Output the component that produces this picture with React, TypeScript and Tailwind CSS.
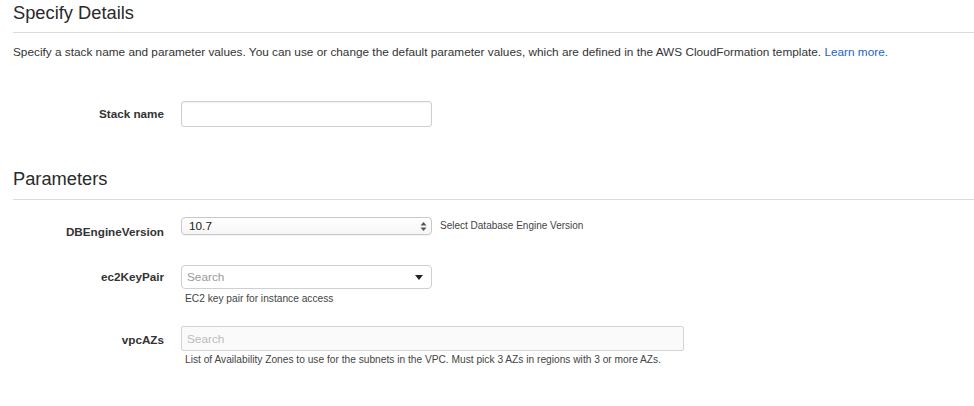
import React from "react";

function Label({ children, className = "" }: { children: React.ReactNode; className?: string }) {
  return (
    <div className={`w-[151px] shrink-0 text-right text-[11.7px] font-bold text-[#333] ${className}`}>{children}</div>
  );
}

export default function App() {
  return (
    <div className="min-h-[406px] w-[974px] bg-white pl-[13px] text-[#333]" style={{ fontFamily: '"Liberation Sans", Arial, sans-serif' }}>
      <h2 className="pt-[1px] text-[18.3px] leading-[24px] font-normal text-[#2a2a2a]">Specify Details</h2>
      <div className="mt-[7px] h-px bg-[#dcdcdc]" />
      <p className="mt-[10px] text-[11.8px] leading-[18px] text-[#333]">
        Specify a stack name and parameter values. You can use or change the default parameter values, which are defined in the AWS CloudFormation template.{" "}
        <a className="text-[#1d63c2]" href="#">Learn more.</a>
      </p>

      <div className="mt-[40px] flex items-center gap-[17px]">
        <Label>Stack name</Label>
        <div className="h-[26px] w-[251px] rounded-[3px] border border-[#cfcfcf] bg-white shadow-[inset_0_1px_2px_rgba(0,0,0,0.06)]" />
      </div>

      <h2 className="mt-[40px] text-[18.3px] leading-[24px] font-normal text-[#2a2a2a]">Parameters</h2>
      <div className="mt-[8px] h-px bg-[#dcdcdc]" />

      <div className="mt-[17px] flex items-start gap-[17px]">
        <Label className="pt-[7px] leading-[16px]">DBEngineVersion</Label>
        <div className="flex items-center gap-[8px]">
          <div className="flex h-[18px] w-[251px] items-center justify-between rounded-[4px] border border-[#c8c8c8] bg-gradient-to-b from-white to-[#f6f6f6] pl-[7px] pr-[4px] shadow-[0_1px_1px_rgba(0,0,0,0.05)]">
            <span className="text-[11.8px] leading-[16px] text-[#222]">10.7</span>
            <svg width="7" height="11" viewBox="0 0 7 11">
              <path d="M3.5 1 L6.5 4.5 L0.5 4.5 Z" fill="#555" />
              <path d="M3.5 10 L6.5 6.5 L0.5 6.5 Z" fill="#555" />
            </svg>
          </div>
          <span className="text-[10px] leading-[14px] text-[#444]">Select Database Engine Version</span>
        </div>
      </div>

      <div className="mt-[25px] flex items-start gap-[17px]">
        <Label className="pt-[4px] leading-[16px]">ec2KeyPair</Label>
        <div className="flex flex-col">
          <div className="flex h-[24px] w-[251px] items-center justify-between rounded-[4px] border border-[#cfcfcf] bg-white pl-[5px] pr-[8px]">
            <span className="text-[11.8px] leading-[16px] text-[#999]">Search</span>
            <svg width="8" height="5" viewBox="0 0 8 5">
              <path d="M0 0 L8 0 L4 5 Z" fill="#222" />
            </svg>
          </div>
          <span className="mt-[3px] pl-[4px] text-[10.2px] leading-[14px] text-[#444]">EC2 key pair for instance access</span>
        </div>
      </div>

      <div className="mt-[20px] flex items-start gap-[17px]">
        <Label className="pt-[6px] leading-[16px]">vpcAZs</Label>
        <div className="flex flex-col">
          <div className="flex h-[25px] w-[503px] items-center rounded-[2px] border border-[#d4d4d4] bg-[#fafafa] pl-[5px]">
            <span className="text-[11.8px] leading-[16px] text-[#bbb]">Search</span>
          </div>
          <span className="mt-[2px] pl-[4px] text-[10.2px] leading-[14px] text-[#444]">List of Availability Zones to use for the subnets in the VPC. Must pick 3 AZs in regions with 3 or more AZs.</span>
        </div>
      </div>
    </div>
  );
}
